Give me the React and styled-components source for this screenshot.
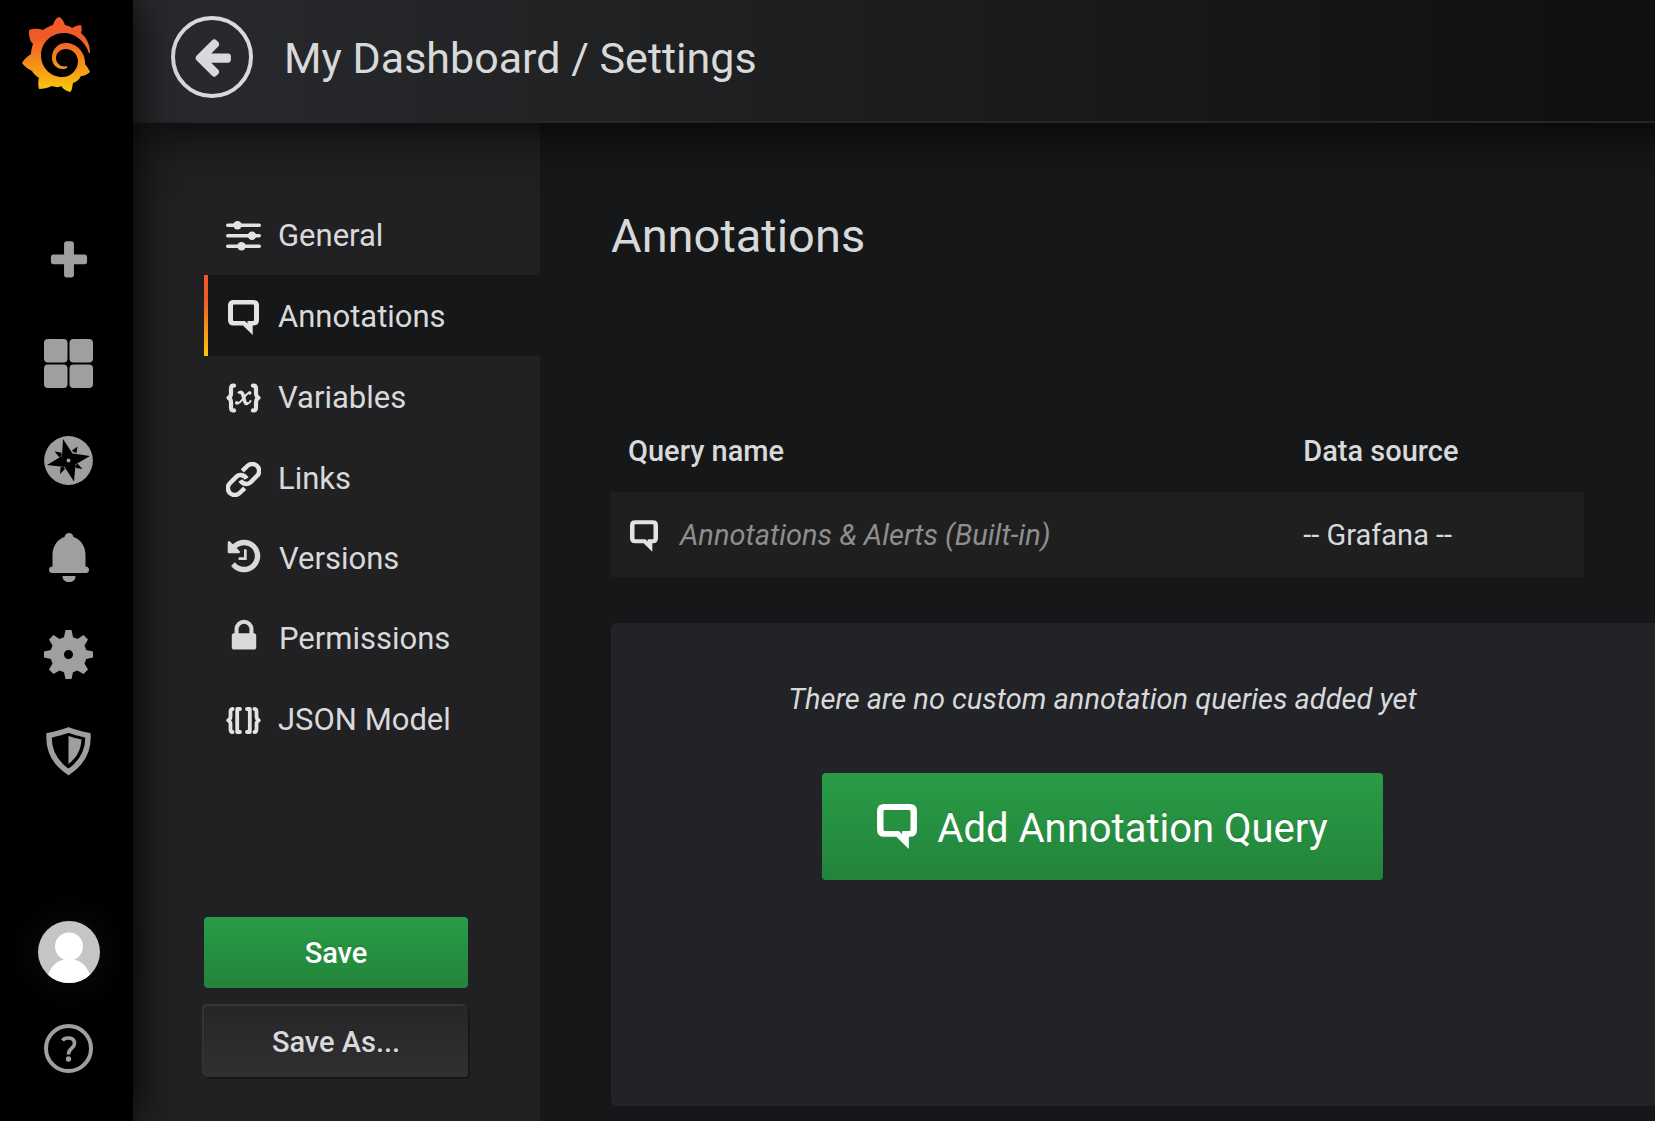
import React from "react";
import styled, { createGlobalStyle, css } from "styled-components";

const text = "#d8d9da";
const iconColor = "#e3e3e3";
const muted = "#9f9f9f";
const green = "linear-gradient(to bottom, #299c46, #23843b)";

const GlobalStyle = createGlobalStyle`
  * { box-sizing: border-box; }
  body {
    margin: 0;
    background: #161719;
    color: ${text};
    font-family: Roboto, "Liberation Sans", sans-serif;
    font-size: 29px;
    line-height: 1.5;
  }
  button { font-family: inherit; cursor: pointer; }
  a { color: inherit; text-decoration: none; }
  svg { display: block; flex: none; }
`;

const Page = styled.div`
  display: flex;
  min-height: 100vh;
`;

const Rail = styled.nav`
  width: 133px;
  flex: none;
  padding: 17px 0 24px;
  display: flex;
  flex-direction: column;
  justify-content: space-between;
  background: #000;
  box-shadow: 0 0 48px #000;
  position: relative;
  z-index: 3;
`;

const RailLogo = styled.a`
  display: block;
  height: 190px;
  padding-left: 21px;
`;

const RailGroup = styled.div`
  display: flex;
  flex-direction: column;
`;

const RailLink = styled.a`
  height: ${(p) => (p.$tall ? 108 : 97)}px;
  padding-left: 4px;
  display: flex;
  align-items: center;
  justify-content: center;
  color: ${muted};
`;

const Avatar = styled.svg`
  border-radius: 50%;
  box-shadow: 0 0 40px #121212;
`;

const Workspace = styled.div`
  flex: 1;
  min-width: 0;
  display: flex;
  flex-direction: column;
  overflow: hidden;
`;

const Header = styled.header`
  height: 123px;
  margin-right: -60px;
  padding: 0 98px 8px 38px;
  display: flex;
  align-items: center;
  gap: 31px;
  background: linear-gradient(90deg, #292a2d, #0e0e0f);
  border-bottom: 2px solid #252628;
  box-shadow: 0 0 60px #000;
  position: relative;
  z-index: 2;
`;

const BackButton = styled.button`
  width: 82px;
  height: 82px;
  padding: 0;
  display: flex;
  align-items: center;
  justify-content: center;
  background: transparent;
  color: ${text};
  border: 4px solid ${text};
  border-radius: 50%;
`;

const PageTitle = styled.h1`
  margin: 0;
  padding-top: 4px;
  font-size: 43px;
  font-weight: 400;
`;

const Body = styled.div`
  flex: 1;
  display: flex;
`;

const Aside = styled.aside`
  width: 407px;
  flex: none;
  padding: 71px 0 44px 71px;
  display: flex;
  flex-direction: column;
  justify-content: space-between;
  background: #212124;
`;

const SettingsNav = styled.nav`
  display: flex;
  flex-direction: column;
`;

const SettingsLink = styled.a`
  height: ${(p) => (p.$compact ? 80 : 81)}px;
  padding: 3px 0 0 22px;
  display: flex;
  align-items: center;
  gap: ${(p) => (p.$compact ? 18 : 17)}px;
  font-size: 31px;
  ${(p) =>
    p.$active &&
    css`
      background: linear-gradient(#f05a28 30%, #fbca0a) left / 4px 100% no-repeat #161719;
    `}
`;

const SettingsIcon = styled.span`
  width: 35px;
  padding-bottom: ${(p) => (p.$compact ? 7 : 0)}px;
  display: flex;
  justify-content: center;
  color: ${(p) => (p.$compact ? text : iconColor)};
`;

const Actions = styled.div`
  width: 264px;
  display: flex;
  flex-direction: column;
  gap: 18px;
`;

const Button = styled.button`
  height: 71px;
  padding: 0;
  border: 0;
  border-radius: 4px;
  display: flex;
  align-items: center;
  justify-content: center;
  gap: 20px;
  font-size: 29px;
  font-weight: 500;
  color: #fff;
  background: ${green};
  text-shadow: 0 -2px 0 rgba(0, 0, 0, 0.1);
  ${(p) =>
    p.$inverse &&
    css`
      color: ${text};
      background: linear-gradient(to bottom, #262628, #303032);
      box-shadow: -2px -2px 0 #343436, 2px 2px 0 #18181a;
    `}
  ${(p) =>
    p.$large &&
    css`
      height: 107px;
      padding: 0 55px;
      font-size: 40px;
      font-weight: 400;
    `}
`;

const LargeLabel = styled.span`
  padding-top: 4px;
`;

const Main = styled.main`
  flex: 1;
  min-width: 0;
  padding: 78px 0 15px 71px;
  display: flex;
  flex-direction: column;
`;

const Heading = styled.h2`
  margin: 0 0 134px;
  font-size: 47px;
  line-height: 70px;
  font-weight: 400;
`;

const QueryTable = styled.table`
  width: calc(100% - 71px);
  border-collapse: collapse;
  table-layout: fixed;
`;

const Th = styled.th`
  width: ${(p) => p.$width};
  height: 87px;
  padding: 6px 0 0 17px;
  text-align: left;
  font-weight: 500;
`;

const Td = styled.td`
  height: 85px;
  padding: 2px 0 0 17px;
  background: #1f1f20;
`;

const QueryName = styled.div`
  padding-left: 2px;
  display: flex;
  align-items: center;
  gap: 22px;
  color: ${iconColor};
`;

const Faint = styled.em`
  color: #8e8e8e;
`;

const EmptyState = styled.section`
  flex: 1;
  margin-top: 46px;
  padding: 54px 61px 0 0;
  display: flex;
  flex-direction: column;
  align-items: center;
  gap: 51px;
  background: #222327;
  border-radius: 6px 0 0 6px;
`;

const EmptyText = styled.p`
  margin: 0;
  line-height: 45px;
  font-style: italic;
`;

function GrafanaLogo() {
  return (
    <svg width="70" height="76" viewBox="21 17 70 76" aria-hidden="true">
      <defs>
        <linearGradient id="flame" x1="0" y1="0" x2="0" y2="1">
          <stop offset="0.28" stopColor="#f05a28" />
          <stop offset="1" stopColor="#fbca0a" />
        </linearGradient>
      </defs>
      <path
        fill="url(#flame)"
        d="M59 17C62 18 64 22 65 25C69 26 71 27 72 28C75 26 79 25 81 25C82 29 82 31 81 33C87 38 90 45 90 53H89C86 43 76 33 64 33C50 33 41 44 41 55C41 68 51 77 62 77C72 77 78 69 78 61C78 54 72 49 66 49C60 49 56 53 56 58C56 64 62 68 67 66C68 68 66 69 63 69C56 69 52 64 52 58C52 49 58 43 66 43C76 43 84 51 85 61V64C87 67 89 69 90 72C86 75 84 76 81 76C79 80 76 82 73 83C72 88 72 91 70 92C66 91 63 89 61 86C58 88 56 87 52 86C48 88 43 89 39 89C38 85 38 80 39 78C35 75 33 73 32 71C28 69 24 66 22 63C24 59 28 56 31 54C31 50 32 47 33 44C29 40 29 35 29 30C34 28 39 29 43 30C46 28 49 26 53 25C54 21 56 18 59 17Z"
      />
    </svg>
  );
}

const glyphs = {
  arrowLeft:
    "M1664 896v128q0 53-32.5 90.5t-84.5 37.5h-704l293 294q38 36 38 90t-38 90l-75 76q-37 37-90 37-52 0-91-37l-651-652q-37-37-37-90 0-52 37-91l651-650q38-38 91-38 52 0 90 38l75 74q38 38 38 91t-38 91l-293 293h704q52 0 84.5 37.5t32.5 90.5z",
  plus: "M1600 736v192q0 40-28 68t-68 28h-416v416q0 40-28 68t-68 28h-192q-40 0-68-28t-28-68v-416h-416q-40 0-68-28t-28-68v-192q0-40 28-68t68-28h416v-416q0-40 28-68t68-28h192q40 0 68 28t28 68v416h416q40 0 68 28t28 68z",
  history:
    "M1664 896q0 156-61 298t-164 245-245 164-298 61q-172 0-327-72.5t-264-204.5q-7-10-6.5-22.5t8.5-20.5l137-138q10-9 25-9 16 2 23 12 73 95 179 147t225 52q104 0 198.5-40.5t163.5-109.5 109.5-163.5 40.5-198.5-40.5-198.5-109.5-163.5-163.5-109.5-198.5-40.5q-98 0-188 35.5t-160 101.5l137 138q31 30 14 69-17 40-59 40h-448q-26 0-45-19t-19-45v-448q0-42 40-59 39-17 69 14l130 129q107-101 244.5-156.5t284.5-55.5q156 0 298 61t245 164 164 245 61 298zm-640-288v448q0 14-9 23t-23 9h-320q-14 0-23-9t-9-23v-64q0-14 9-23t23-9h224v-352q0-14 9-23t23-9h64q14 0 23 9t9 23z",
  lock: "M640 768h512v-192q0-106-75-181t-181-75-181 75-75 181v192zm832 96v576q0 40-28 68t-68 28h-960q-40 0-68-28t-28-68v-576q0-40 28-68t68-28h32v-192q0-184 132-316t316-132 316 132 132 316v192h32q40 0 68 28t28 68z",
};

function Glyph({ name, size }) {
  return (
    <svg width={size} height={size} viewBox="0 0 1792 1792" fill="currentColor">
      <path d={glyphs[name]} />
    </svg>
  );
}

function GridIcon() {
  return (
    <svg width="49" height="49" viewBox="0 0 49 49" fill="currentColor">
      <rect width="23.5" height="23.5" rx="4" />
      <rect x="25.5" width="23.5" height="23.5" rx="4" />
      <rect y="25.5" width="23.5" height="23.5" rx="4" />
      <rect x="25.5" y="25.5" width="23.5" height="23.5" rx="4" />
    </svg>
  );
}

function CompassIcon() {
  return (
    <svg width="49" height="49" viewBox="0 0 49 49">
      <circle cx="24.5" cy="24.5" r="24.4" fill="currentColor" />
      <g fill="#000">
        <path d="M19 3L28.5 17.5L46 20L31.5 28.5L30 45.5L20.5 31L3 29L18 20Z" />
        <path d="M33.5 10.5L32.5 17L29.5 16L28 14.5ZM10.5 15.5L17 16.5L18 19L15.5 21.5ZM38.5 33L32 32L31 30L33.5 27.5ZM16 38L16.5 31.5L19 30.5L21 33Z" />
      </g>
      <circle cx="24.5" cy="24.5" r="2" fill="currentColor" />
    </svg>
  );
}

function BellIcon() {
  return (
    <svg width="40" height="49" viewBox="0 0 40 49" fill="currentColor">
      <path d="M20 0C22.3 0 24 1.5 24.5 4C31.5 6 36.5 13 36.5 22V33.5C39 33.5 40 35 40 36.800C40 38.700 39 40 37 40H3C1 40 0 38.700 0 36.800C0 35 1 33.500 3.500 33.500V22C3.500 13 8.500 6 15.500 4C16 1.500 17.700 0 20 0Z" />
      <path d="M13.5 43H26.500C26.500 47 23.800 49 20 49S13.500 47 13.500 43Z" />
    </svg>
  );
}

function GearIcon() {
  return (
    <svg width="49" height="49" viewBox="0 0 49 49" fill="currentColor">
      <path
        fillRule="evenodd"
        d="M21.5 0H27.5L29 7.2L33.5 9L39.5 5L44 9.5L40.5 15.5L42.2 20L49 21.5V27.5L42.2 29L40.5 33.5L44 39.5L39.5 44L33.5 40.5L29 42.2L27.5 49H21.5L20 42.2L15.5 40.5L9.500 44L5 39.500L8.500 33.500L6.800 29L0 27.500V21.500L6.800 20L8.500 15.500L5 9.500L9.500 5L15.500 9L20 7.200ZM24.500 20A4.500 4.500 0 1 0 24.500 29A4.500 4.500 0 1 0 24.500 20Z"
      />
    </svg>
  );
}

function ShieldIcon() {
  return (
    <svg width="45" height="49" viewBox="0 0 45 49">
      <path
        d="M22.5 3C29 5.5 35.5 7 42 8.5C42.5 24 36 36 22.5 45C9 36 2.5 24 3 8.5C9.5 7 16 5.5 22.5 3Z"
        fill="none"
        stroke="currentColor"
        strokeWidth="5.4"
      />
      <path d="M22.5 9C27 10.5 31 11.5 35.5 12.5C35 23 30.5 31 22.5 37Z" fill="currentColor" />
    </svg>
  );
}

function AvatarIcon() {
  return (
    <Avatar width="62" height="62" viewBox="0 0 62 62">
      <rect width="62" height="62" fill="#c5c5c5" />
      <circle cx="31" cy="25.5" r="14" fill="#fff" />
      <path d="M10 54C14 43 21 38 31 38S48 43 52 54V62H10Z" fill="#fff" />
    </Avatar>
  );
}

function HelpIcon() {
  return (
    <svg width="49" height="49" viewBox="0 0 49 49" fill="none" stroke="currentColor">
      <circle cx="24.5" cy="24.5" r="22.5" strokeWidth="4" />
      <path d="M18.5 16.5C21 13 30.5 12.5 30.5 19.500C30.500 24.500 24.500 24 24.500 30.500" strokeWidth="3.600" />
      <circle cx="24.5" cy="35" r="2.7" fill="currentColor" stroke="none" />
    </svg>
  );
}

function SlidersIcon() {
  return (
    <svg width="35" height="30" viewBox="0 0 35 30" fill="currentColor">
      <rect y="2.5" width="35" height="3.6" rx="1.8" />
      <rect y="13" width="35" height="3.6" rx="1.8" />
      <rect y="23.5" width="35" height="3.6" rx="1.8" />
      <circle cx="11.5" cy="4.3" r="4.2" />
      <circle cx="26" cy="14.8" r="4.2" />
      <circle cx="15.5" cy="25.3" r="4.2" />
    </svg>
  );
}

function CommentIcon({ width }) {
  return (
    <svg width={width} height={Math.round(width * 1.13)} viewBox="0 0 31 35" fill="currentColor">
      <path
        fillRule="evenodd"
        d="M5.5 0H25.5Q31 0 31 5.5V20Q31 25.5 25.5 25.5H24.700V35L15 25.500H5.500Q0 25.500 0 20V5.500Q0 0 5.500 0ZM6 4.600Q5 4.600 5 5.600V20Q5 21 6 21H17L19.500 23.500V21H25Q26 21 26 20V5.600Q26 4.600 25 4.600Z"
      />
    </svg>
  );
}

function VariableIcon() {
  return (
    <svg width="35" height="30" viewBox="0 0 35 30" fill="none" stroke="currentColor" strokeLinecap="round">
      <path
        strokeWidth="4.2"
        strokeLinejoin="round"
        d="M8 2.600Q5 2 5 5.500V10.500Q5 13.500 2.500 14.800Q5 16 5 19V24.500Q5 28 8 27.400M27 2.600Q30 2 30 5.500V10.500Q30 13.500 32.500 14.800Q30 16 30 19V24.500Q30 28 27 27.400"
      />
      <path strokeWidth="3.6" d="M14.5 9.500C18 8 17.500 21 20.500 20.500" />
      <path strokeWidth="2" d="M12.500 9.500L15 9M21 20.500Q23.500 20.500 24.500 18M24 9.500C20 8.500 15.500 21.500 10.500 20.500" />
      <circle cx="23.8" cy="10" r="1.700" fill="currentColor" stroke="none" />
      <circle cx="10.800" cy="19.800" r="1.700" fill="currentColor" stroke="none" />
    </svg>
  );
}

function LinkIcon() {
  return (
    <svg
      width="35"
      height="35"
      viewBox="0.7 0.7 22.6 22.6"
      fill="none"
      stroke="currentColor"
      strokeWidth="2.9"
    >
      <path d="M10 12.6a4.300 4.300 0 0 0 6.700 1.100l4.100-4.100a4.250 4.250 0 0 0-6.300-6.300l-3.300 3.200" />
      <path d="M14 11.400a4.300 4.300 0 0 0-6.700-1.100l-4.100 4.100a4.250 4.250 0 0 0 6.300 6.300l3.300-3.200" />
    </svg>
  );
}

function JsonIcon() {
  return (
    <svg width="35" height="27" viewBox="0 0 35 27" fill="none" stroke="currentColor" strokeLinecap="round">
      <path
        strokeWidth="3.8"
        strokeLinejoin="round"
        d="M6.500 2Q4.500 1.800 4.500 5V9.500Q4.500 12 2.200 13.300Q4.500 14.500 4.500 17V22Q4.500 25.200 6.500 25M28.500 2Q30.500 1.800 30.500 5V9.500Q30.500 12 32.800 13.300Q30.500 14.500 30.500 17V22Q30.500 25.200 28.500 25"
      />
      <path strokeWidth="3.8" strokeLinejoin="round" d="M14 2H11.200V25H14M21 2H23.800V25H21" />
    </svg>
  );
}

const railItems = [
  { label: "Create", icon: <Glyph name="plus" size={46} />, tall: true },
  { label: "Dashboards", icon: <GridIcon /> },
  { label: "Explore", icon: <CompassIcon /> },
  { label: "Alerting", icon: <BellIcon /> },
  { label: "Configuration", icon: <GearIcon /> },
  { label: "Server admin", icon: <ShieldIcon /> },
];

const settings = [
  { label: "General", icon: <SlidersIcon /> },
  { label: "Annotations", icon: <CommentIcon width={31} />, active: true },
  { label: "Variables", icon: <VariableIcon /> },
  { label: "Links", icon: <LinkIcon /> },
  { label: "Versions", icon: <Glyph name="history" size={38} />, compact: true },
  { label: "Permissions", icon: <Glyph name="lock" size={38} />, compact: true },
  { label: "JSON Model", icon: <JsonIcon /> },
];

export default function App() {
  return (
    <>
      <GlobalStyle />
      <Page>
        <Rail aria-label="Main">
          <RailGroup>
            <RailLogo href="#" aria-label="Home">
              <GrafanaLogo />
            </RailLogo>
            {railItems.map((item) => (
              <RailLink key={item.label} href="#" aria-label={item.label} $tall={item.tall}>
                {item.icon}
              </RailLink>
            ))}
          </RailGroup>
          <RailGroup>
            <RailLink href="#" aria-label="Profile">
              <AvatarIcon />
            </RailLink>
            <RailLink href="#" aria-label="Help">
              <HelpIcon />
            </RailLink>
          </RailGroup>
        </Rail>
        <Workspace>
          <Header>
            <BackButton aria-label="Back">
              <Glyph name="arrowLeft" size={43} />
            </BackButton>
            <PageTitle>My Dashboard / Settings</PageTitle>
          </Header>
          <Body>
            <Aside>
              <SettingsNav aria-label="Settings">
                {settings.map((s) => (
                  <SettingsLink
                    key={s.label}
                    href="#"
                    $active={s.active}
                    $compact={s.compact}
                    aria-current={s.active ? "page" : undefined}
                  >
                    <SettingsIcon $compact={s.compact}>{s.icon}</SettingsIcon>
                    {s.label}
                  </SettingsLink>
                ))}
              </SettingsNav>
              <Actions>
                <Button>Save</Button>
                <Button $inverse>Save As...</Button>
              </Actions>
            </Aside>
            <Main>
              <Heading>Annotations</Heading>
              <QueryTable>
                <thead>
                  <tr>
                    <Th $width="69.4%">Query name</Th>
                    <Th>Data source</Th>
                  </tr>
                </thead>
                <tbody>
                  <tr>
                    <Td>
                      <QueryName>
                        <CommentIcon width={28} />
                        <Faint>Annotations &amp; Alerts (Built-in)</Faint>
                      </QueryName>
                    </Td>
                    <Td>-- Grafana --</Td>
                  </tr>
                </tbody>
              </QueryTable>
              <EmptyState>
                <EmptyText>There are no custom annotation queries added yet</EmptyText>
                <Button $large>
                  <CommentIcon width={40} />
                  <LargeLabel>Add Annotation Query</LargeLabel>
                </Button>
              </EmptyState>
            </Main>
          </Body>
        </Workspace>
      </Page>
    </>
  );
}
